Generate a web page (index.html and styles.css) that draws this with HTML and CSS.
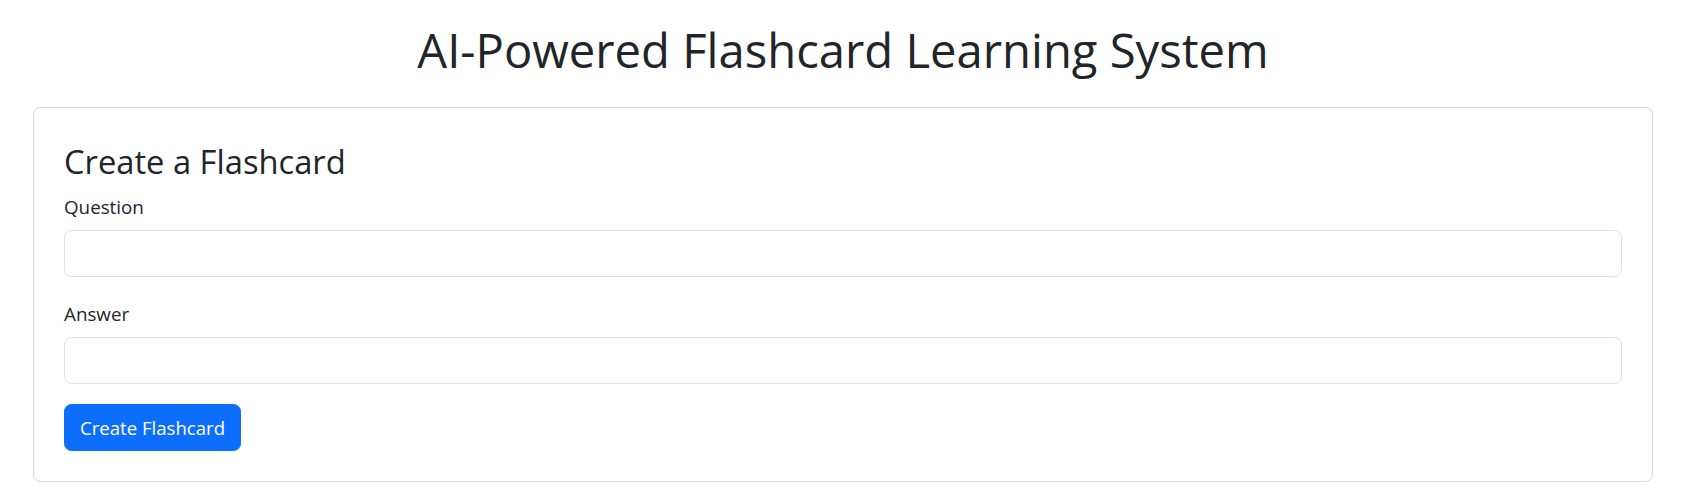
FILE: index.html
```html
<!DOCTYPE html>
<html lang="en">
<head>
<meta charset="utf-8">
<title>AI-Powered Flashcard Learning System</title>
<link rel="stylesheet" href="styles.css">
</head>
<body>
<div class="page">
  <h1 class="page-title">AI-Powered Flashcard Learning System</h1>
  <div class="card">
    <div class="card-body">
      <h3 class="card-title">Create a Flashcard</h3>
      <form class="form">
        <div class="field">
          <label class="field-label" for="question">Question</label>
          <input class="field-input" type="text" id="question">
        </div>
        <div class="field">
          <label class="field-label" for="answer">Answer</label>
          <input class="field-input" type="text" id="answer">
        </div>
        <button class="btn-primary" type="button">Create Flashcard</button>
      </form>
    </div>
  </div>
</div>
</body>
</html>
```

FILE: styles.css
```css
* { box-sizing: border-box; }
html, body { margin: 0; padding: 0; background: #fff; }
body {
  font-family: "Open Sans", "Noto Sans", sans-serif;
  color: #212529;
}
.page {
  padding: 20px 37px 18px 33px;
}
.page-title {
  margin: 0 0 27px;
  font-size: 47.2px;
  font-weight: 400;
  line-height: 60px;
  text-align: center;
  color: #212529;
}
.card {
  border: 1px solid #d6d7d8;
  border-radius: 7.5px;
  background: #fff;
}
.card-body {
  padding: 30px;
}
.card-title {
  margin: 0 0 7px;
  padding-top: 3px;
  font-size: 32.7px;
  font-weight: 400;
  line-height: 42px;
}
.form { display: flex; flex-direction: column; align-items: flex-start; }
.field { width: 100%; margin-bottom: 20px; display: flex; flex-direction: column; }
.field-label {
  font-size: 18.8px;
  line-height: 30px;
  padding-top: 2px;
  margin-bottom: 8px;
}
.field-input {
  display: block;
  width: 100%;
  height: 47px;
  padding: 7.5px 15px;
  font: inherit;
  font-size: 18.8px;
  border: 1px solid #dee2e6;
  border-radius: 7.5px;
  background: #fff;
  outline: none;
}
.btn-primary {
  height: 47px;
  padding: 0 15px;
  font-family: inherit;
  font-size: 18.6px;
  line-height: 30px;
  color: #fff;
  background: #0d6efd;
  border: 1px solid #0d6efd;
  border-radius: 7.5px;
  cursor: pointer;
}
```
